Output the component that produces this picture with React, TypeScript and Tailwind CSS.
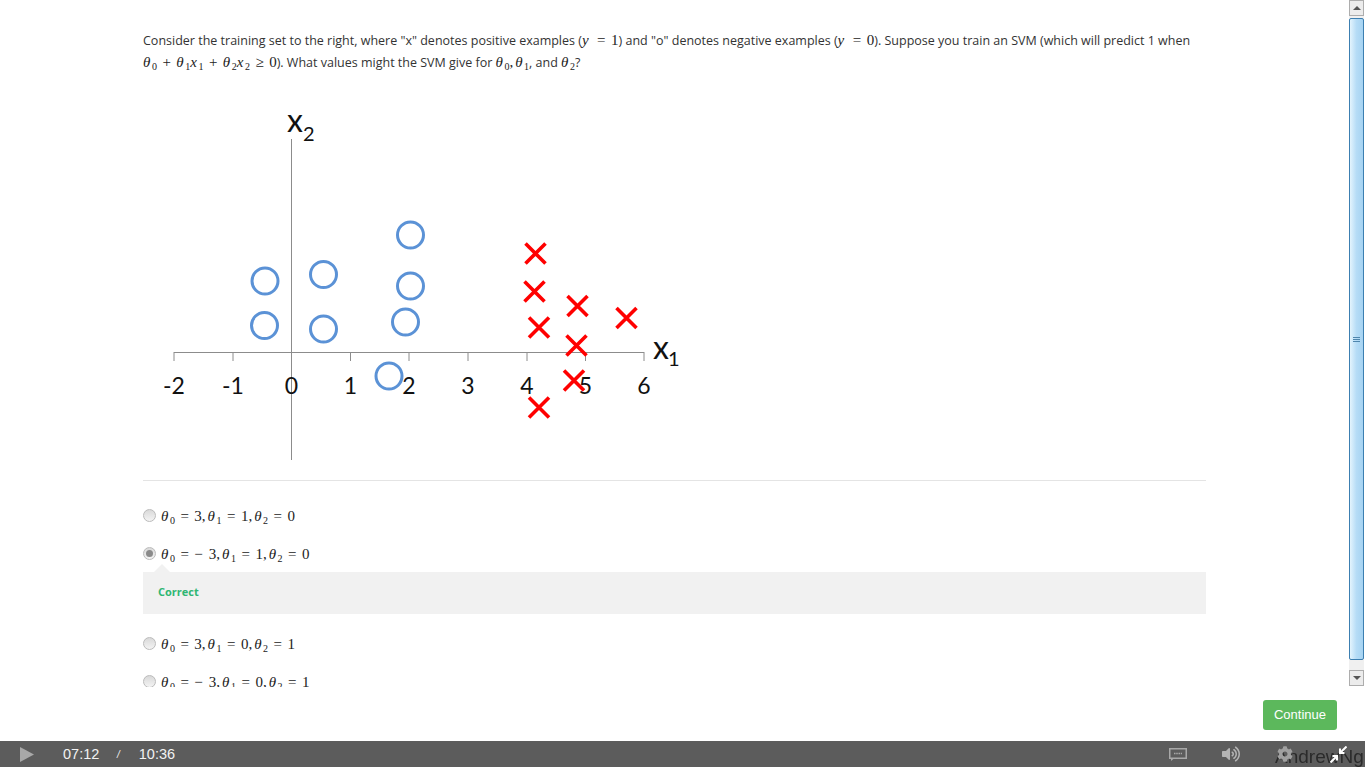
import React from 'react';
import { FaCog, FaVolumeUp } from 'react-icons/fa';

const circles = [
  [410.5, 235], [265, 281], [323.5, 274.5], [410.5, 286],
  [264.5, 325.5], [323.5, 329], [405.5, 322], [389, 376],
];
const crosses = [
  [535.5, 253.5], [534.5, 291.5], [577.5, 306], [626.5, 318],
  [539, 327.5], [576.5, 345.5], [574, 380.5], [539, 407.5],
];
const ticks = [
  { x: 174, label: '-2' }, { x: 233, label: '-1' }, { x: 291.5, label: '0' },
  { x: 350.5, label: '1' }, { x: 409, label: '2' }, { x: 468, label: '3' },
  { x: 527, label: '4' }, { x: 585.5, label: '5' }, { x: 644, label: '6' },
];

// Greek/variable letter with an upright subscript, roughly what MathJax draws
const V: React.FC<{ c: string; s?: string }> = ({ c, s }) => (
  <span className="whitespace-nowrap">
    <i className="pr-[0.5px]">{c}</i>
    {s && <span className="relative top-[3px] ml-[1px] text-[10px] leading-none">{s}</span>}
  </span>
);

// binary operator with the wide gaps MathJax leaves around it
const Op: React.FC<{ c: string }> = ({ c }) => <span className="mx-[5.5px]">{c}</span>;

const Math: React.FC<{ children: React.ReactNode }> = ({ children }) => (
  <span className="font-['Liberation_Serif',serif] text-[15px] leading-none text-[#222]">{children}</span>
);

const Comma = () => <span className="mr-[2px]">,</span>;

const Eq: React.FC<{ a: string; b: string; c: string; neg?: boolean }> = ({ a, b, c, neg }) => (
  <Math>
    <V c="θ" s="0" /><Op c="=" />{neg && <span className="mr-[6px]">−</span>}{a}<Comma />
    <V c="θ" s="1" /><Op c="=" />{b}<Comma />
    <V c="θ" s="2" /><Op c="=" />{c}
  </Math>
);

const Radio: React.FC<{ checked?: boolean }> = ({ checked }) => (
  <span className="w-[13px] h-[13px] -mt-[1px] rounded-full border border-[#bbb] bg-gradient-to-b from-[#d9d9d9] to-[#f4f4f4] flex items-center justify-center shrink-0">
    {checked && <span className="w-[7px] h-[7px] rounded-full bg-[#8a8a8a]" />}
  </span>
);

const Option: React.FC<{ a: string; b: string; c: string; neg?: boolean; checked?: boolean }> = ({ a, b, c, neg, checked }) => (
  <div className="flex items-center gap-[5px] h-[22px]">
    <Radio checked={checked} />
    <Eq a={a} b={b} c={c} neg={neg} />
  </div>
);

const Chart = () => (
  <svg width="560" height="370" viewBox="143 100 560 370" className="block">
    <g stroke="#8c8c8c" strokeWidth="1" fill="none">
      <line x1="291.5" y1="139" x2="291.5" y2="460" />
      <line x1="174" y1="352.5" x2="644" y2="352.5" />
      {ticks.map(t => (
        <line key={t.x} x1={t.x} y1="352" x2={t.x} y2="361" />
      ))}
    </g>
    <g fontFamily="Lato, sans-serif" fontSize="23" fill="#111" textAnchor="middle">
      {ticks.map(t => (
        <text key={t.label} x={t.x} y="394">{t.label}</text>
      ))}
    </g>
    <g fontFamily="Lato, sans-serif" fill="#111">
      <text x="287" y="132" fontSize="32">x</text>
      <text x="303" y="141" fontSize="20">2</text>
      <text x="653" y="359" fontSize="32">x</text>
      <text x="668" y="366" fontSize="20">1</text>
    </g>
    <g stroke="#5b92d6" strokeWidth="3" fill="none">
      {circles.map(([x, y]) => (
        <circle key={`${x}-${y}`} cx={x} cy={y} r="13" />
      ))}
    </g>
    <g stroke="#ff0000" strokeWidth="3.6" fill="none">
      {crosses.map(([x, y]) => (
        <path key={`${x}-${y}`} d={`M${x - 10} ${y - 10}L${x + 10} ${y + 10}M${x + 10} ${y - 10}L${x - 10} ${y + 10}`} />
      ))}
    </g>
  </svg>
);

const Scrollbar = () => (
  <div className="w-[15px] mr-[1px] h-[686px] flex flex-col bg-[#f0f0f0] shrink-0">
    <div className="h-[16px] border border-[#adadad] bg-[#ececec] flex items-center justify-center">
      <span className="w-0 h-0 border-x-[4px] border-x-transparent border-b-[4px] border-b-[#555]" />
    </div>
    <div className="h-[642px] mt-[2px] rounded-[2px] border border-[#3c7fb1] bg-gradient-to-r from-[#e3f4fd] via-[#b5dcf6] to-[#a6d3f2] flex items-center justify-center">
      <div className="flex flex-col gap-[1px]">
        <span className="w-[7px] h-[1px] bg-[#4f86ad]" />
        <span className="w-[7px] h-[1px] bg-[#4f86ad]" />
        <span className="w-[7px] h-[1px] bg-[#4f86ad]" />
      </div>
    </div>
    <div className="h-[16px] mt-auto border border-[#adadad] bg-[#ececec] flex items-center justify-center">
      <span className="w-0 h-0 border-x-[4px] border-x-transparent border-t-[4px] border-t-[#555]" />
    </div>
  </div>
);

const ControlBar = () => (
  <div className="relative h-[26px] bg-[#5c5c5c] flex items-center font-['Liberation_Sans',sans-serif] text-[14.5px] text-[#f2f2f2] shrink-0 overflow-visible">
    <span className="absolute left-[926px] -top-[2px] w-[5px] h-[2px] rounded-t-full bg-white" />
    <span className="absolute left-[1275px] top-[3px] text-[19px] leading-[26px] h-[23px] overflow-hidden text-[#2a2a2a] font-medium blur-[0.5px] whitespace-nowrap">
      AndrewNg
    </span>
    <svg width="14" height="15" viewBox="0 0 14 15" className="ml-[20px]">
      <path d="M0 0L14 7.5L0 15Z" fill="#a8a8a8" />
    </svg>
    <span className="ml-[29px] w-[37px] pt-[1px]">07:12</span>
    <span className="ml-[17px] text-[10px] italic pt-[1px]">/</span>
    <span className="ml-[19px] pt-[1px]">10:36</span>
    <div className="ml-auto flex items-center relative">
      <svg width="18" height="13" viewBox="0 0 18 13" fill="none" className="text-[#a8a8a8]">
        <rect x="0.75" y="0.75" width="16.5" height="9.5" stroke="currentColor" strokeWidth="1.5" />
        <path d="M5 5.5h8" stroke="currentColor" strokeWidth="1.5" strokeDasharray="1.5 0.75" />
        <path d="M2 10.5v2.5l3-2.5" fill="currentColor" />
      </svg>
      <FaVolumeUp className="ml-[35px] text-[#b4b4b4]" size={18} />
      <FaCog className="ml-[37px] text-[#a0a0a0]" size={16} />
      <svg width="17" height="17" viewBox="0 0 17 17" className="ml-[37px] mr-[18px]">
        <path d="M16.5 0.5L10.5 6.5M10 2.5V7H14.5M0.5 16.5L6.5 10.5M7 14.5V10H2.5" stroke="#fff" strokeWidth="2" fill="none" />
      </svg>
    </div>
  </div>
);

export default function App() {
  return (
    <div className="h-[767px] w-full flex flex-col overflow-hidden bg-white font-['Open_Sans',sans-serif] text-[12.5px] text-[#333]">
      <div className="flex justify-between h-[688px] shrink-0 overflow-hidden">
        <div className="w-[1063px] ml-[143px] h-[687px] overflow-hidden pt-[30px]">
          <p className="leading-[22px]">
            Consider the training set to the right, where "x" denotes positive examples (<Math><span className="mr-[2.5px]"><V c="y" /></span><Op c="=" />1</Math>) and "o" denotes negative examples (<Math><span className="mr-[2.5px]"><V c="y" /></span><Op c="=" />0</Math>). Suppose you train an SVM (which will predict 1 when
            <br />
            <Math><V c="θ" s="0" /><Op c="+" /><V c="θ" s="1" /><V c="x" s="1" /><Op c="+" /><V c="θ" s="2" /><V c="x" s="2" /><Op c="≥" />0</Math>). What values might the SVM give for <Math><V c="θ" s="0" /><Comma /><V c="θ" s="1" /></Math>, and <Math><V c="θ" s="2" /></Math>?
          </p>
          <div className="mt-[26px]">
            <Chart />
          </div>
          <div className="mt-[10px] border-t border-[#e4e4e4] pt-[24px]">
            <Option a="3" b="1" c="0" />
            <div className="mt-[16px]">
              <Option a="3" b="1" c="0" neg checked />
            </div>
            <div className="relative mt-[7px] h-[42px] bg-[#f1f1f1] flex items-center pl-[15px] pb-[2px] text-[11px] font-bold text-[#2fb673]">
              <span className="absolute left-[11px] -top-[8px] w-0 h-0 border-x-[8px] border-x-transparent border-b-[8px] border-b-[#f1f1f1]" />
              Correct
            </div>
            <div className="mt-[19px]">
              <Option a="3" b="0" c="1" />
            </div>
            <div className="mt-[16px]">
              <Option a="3" b="0" c="1" neg />
            </div>
          </div>
        </div>
        <Scrollbar />
      </div>
      <div className="h-[53px] flex items-center justify-end pr-[28px] pt-[1px] shrink-0">
        <button className="w-[74px] h-[30px] rounded-[3px] bg-[#5cb85c] text-white font-['Liberation_Sans',sans-serif] text-[13px]">
          Continue
        </button>
      </div>
      <ControlBar />
    </div>
  );
}
